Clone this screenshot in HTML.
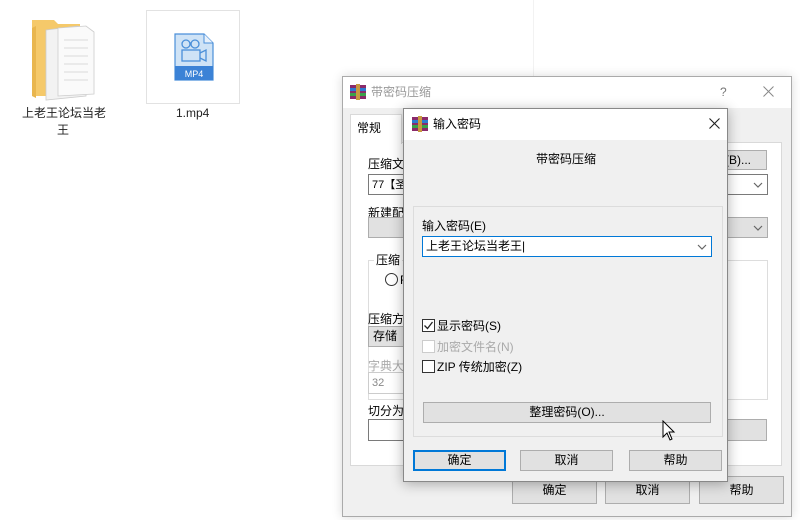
<!DOCTYPE html>
<html><head><meta charset="utf-8">
<style>
*{margin:0;padding:0;box-sizing:border-box}
body{width:800px;height:520px;background:#fff;position:relative;overflow:hidden;font-family:"Liberation Sans","Noto Sans CJK SC",sans-serif;font-size:12px;color:#000}
.a{position:absolute}
.t{position:absolute;white-space:nowrap;line-height:14px}
.btn{position:absolute;background:#e1e1e1;border:1px solid #adadad;text-align:center;line-height:18px}
.box{position:absolute;background:#fff;border:1px solid #7a7a7a}
.chev{position:absolute;width:10px;height:6px}
.cb{position:absolute;width:13px;height:13px;border:1px solid #333;background:#fff}
</style></head><body>

<div class="a" style="left:533px;top:0;width:1px;height:78px;background:#f2f2f2"></div>
<svg class="a" style="left:28px;top:16px" width="70" height="86" viewBox="0 0 70 86">
<path d="M4 4 L26 4 L30 8 L52 8 L52 80 L4 80 Z" fill="#f5c96a"/>
<path d="M4 12 L8 10 L8 82 L4 80Z" fill="#e9b64e"/>
<path d="M18 14 L50 10 L58 16 L58 80 L18 84 Z" fill="#f2f2f2" stroke="#ccc" stroke-width="0.8"/>
<path d="M30 12 L58 10 L66 16 L66 78 L30 80 Z" fill="#fafafa" stroke="#ccc" stroke-width="0.8"/>
<g stroke="#bbb" stroke-width="0.6"><line x1="36" y1="24" x2="60" y2="24"/><line x1="36" y1="32" x2="60" y2="32"/><line x1="36" y1="40" x2="60" y2="40"/><line x1="36" y1="48" x2="60" y2="48"/><line x1="36" y1="56" x2="60" y2="56"/><line x1="36" y1="64" x2="60" y2="64"/></g>
</svg>
<div class="t" style="left:22px;top:106px;font-size:12px;color:#222">上老王论坛当老</div>
<div class="t" style="left:57px;top:123px;font-size:12px;color:#222">王</div>

<div class="a" style="left:146px;top:10px;width:94px;height:94px;border:1px solid #e2e2e2"></div>
<svg class="a" style="left:174px;top:33px" width="40" height="48" viewBox="0 0 40 48">
<path d="M1 1 L30 1 L39 10 L39 47 L1 47 Z" fill="#cfe3f6" stroke="#4a8fd9" stroke-width="1.2"/>
<path d="M30 1 L30 10 L39 10" fill="#e8f1fb" stroke="#4a8fd9" stroke-width="1"/>
<rect x="1" y="33" width="38" height="14" fill="#3b82d6"/>
<text x="20" y="44" font-size="9" fill="#fff" text-anchor="middle" font-family="Liberation Sans">MP4</text>
<circle cx="12" cy="11" r="4" fill="none" stroke="#4a8fd9" stroke-width="1.3"/>
<circle cx="21" cy="11" r="4" fill="none" stroke="#4a8fd9" stroke-width="1.3"/>
<rect x="8" y="17" width="18" height="11" fill="none" stroke="#4a8fd9" stroke-width="1.3"/>
<path d="M26 20 L32 17 L32 28 L26 25" fill="none" stroke="#4a8fd9" stroke-width="1.3"/>
</svg>
<div class="t" style="left:176px;top:106px;color:#222">1.mp4</div>

<div class="a" style="left:342px;top:76px;width:450px;height:441px;border:1px solid #aaa;background:#f0f0f0;box-shadow:0 0 10px rgba(0,0,0,.15)">
  <div class="a" style="left:0;top:0;width:448px;height:31px;background:#fff"></div>
</div>
<svg class="a" style="left:350px;top:84px" width="16" height="16" viewBox="0 0 16 16"><rect x="0" y="1" width="16" height="14" fill="#8a2a6a"/><rect x="0" y="4" width="16" height="3" fill="#2c7bd0"/><rect x="0" y="9" width="16" height="3" fill="#3aa24a"/><rect x="6" y="0" width="4" height="16" fill="#c89a40"/></svg>
<div class="t" style="left:371px;top:85px;font-size:12px;color:#999">带密码压缩</div>
<div class="t" style="left:720px;top:85px;color:#777">?</div>
<svg class="a" style="left:763px;top:86px" width="11" height="11" viewBox="0 0 11 11"><path d="M0.5 0.5 L10.5 10.5 M10.5 0.5 L0.5 10.5" stroke="#888" stroke-width="1"/></svg>
<div class="a" style="left:350px;top:142px;width:432px;height:324px;background:#fff;border:1px solid #d9d9d9"></div>
<div class="a" style="left:350px;top:114px;width:52px;height:30px;background:#fff;border:1px solid #d9d9d9;border-bottom:none"></div>
<div class="t" style="left:357px;top:121px">常规</div>
<div class="t" style="left:368px;top:157px">压缩文</div>
<div class="box" style="left:368px;top:174px;width:400px;height:21px"></div>
<div class="t" style="left:372px;top:178px;font-size:11px">77【圣</div>
<svg class="chev" style="left:753px;top:182px" viewBox="0 0 10 6"><path d="M1 1 L5 5 L9 1" fill="none" stroke="#666" stroke-width="1.2"/></svg>
<div class="btn" style="left:720px;top:150px;width:47px;height:20px;text-align:left;padding-left:4px">(B)...</div>
<div class="t" style="left:368px;top:206px">新建配</div>
<div class="btn" style="left:368px;top:217px;width:400px;height:21px"></div>
<svg class="chev" style="left:753px;top:225px" viewBox="0 0 10 6"><path d="M1 1 L5 5 L9 1" fill="none" stroke="#666" stroke-width="1.2"/></svg>
<div class="a" style="left:368px;top:260px;width:400px;height:140px;border:1px solid #ddd"></div>
<div class="t" style="left:374px;top:253px;background:#fff;padding:0 2px">压缩</div>
<div class="a" style="left:385px;top:273px;width:13px;height:13px;border:1px solid #333;border-radius:50%"></div>
<div class="t" style="left:400px;top:273px">R</div>
<div class="t" style="left:368px;top:312px">压缩方</div>
<div class="btn" style="left:368px;top:326px;width:60px;height:21px;text-align:left;padding-left:4px">存储</div>
<div class="t" style="left:368px;top:359px;color:#aaa">字典大</div>
<div class="a" style="left:368px;top:372px;width:60px;height:22px;border:1px solid #ccc;background:#fff"></div>
<div class="t" style="left:372px;top:376px;color:#888;font-size:11px">32</div>
<div class="t" style="left:368px;top:404px">切分为</div>
<div class="box" style="left:368px;top:419px;width:60px;height:22px"></div>
<div class="btn" style="left:720px;top:419px;width:47px;height:22px"></div>
<div class="btn" style="left:512px;top:476px;width:85px;height:28px;line-height:26px">确定</div>
<div class="btn" style="left:605px;top:476px;width:85px;height:28px;line-height:26px">取消</div>
<div class="btn" style="left:699px;top:476px;width:85px;height:28px;line-height:26px">帮助</div>

<div class="a" style="left:403px;top:108px;width:325px;height:374px;border:1px solid #888;background:#f0f0f0;box-shadow:0 2px 12px rgba(0,0,0,.3)">
  <div class="a" style="left:0;top:0;width:323px;height:31px;background:#fff"></div>
</div>
<svg class="a" style="left:412px;top:116px" width="16" height="16" viewBox="0 0 16 16"><rect x="0" y="1" width="16" height="14" fill="#8a2a6a"/><rect x="0" y="4" width="16" height="3" fill="#2c7bd0"/><rect x="0" y="9" width="16" height="3" fill="#3aa24a"/><rect x="6" y="0" width="4" height="16" fill="#c89a40"/></svg>
<div class="t" style="left:433px;top:117px">输入密码</div>
<svg class="a" style="left:709px;top:118px" width="11" height="11" viewBox="0 0 11 11"><path d="M0.5 0.5 L10.5 10.5 M10.5 0.5 L0.5 10.5" stroke="#222" stroke-width="1.1"/></svg>
<div class="t" style="left:536px;top:152px">带密码压缩</div>
<div class="a" style="left:413px;top:206px;width:310px;height:231px;border:1px solid #dcdcdc;background:#f0f0f0"></div>
<div class="t" style="left:422px;top:219px">输入密码(E)</div>
<div class="a" style="left:422px;top:236px;width:290px;height:21px;background:#fff;border:1px solid #0078d7"></div>
<div class="t" style="left:426px;top:239px;font-size:12px">上老王论坛当老王|</div>
<svg class="chev" style="left:697px;top:244px" viewBox="0 0 10 6"><path d="M1 1 L5 5 L9 1" fill="none" stroke="#666" stroke-width="1.2"/></svg>
<div class="cb" style="left:422px;top:319px"></div>
<svg class="a" style="left:423px;top:320px" width="11" height="11" viewBox="0 0 11 11"><path d="M1.5 5.5 L4.5 8.5 L9.5 2" fill="none" stroke="#222" stroke-width="1.3"/></svg>
<div class="t" style="left:437px;top:319px">显示密码(S)</div>
<div class="cb" style="left:422px;top:340px;border-color:#ccc"></div>
<div class="t" style="left:437px;top:340px;color:#aaa">加密文件名(N)</div>
<div class="cb" style="left:422px;top:360px"></div>
<div class="t" style="left:437px;top:360px">ZIP 传统加密(Z)</div>
<div class="btn" style="left:423px;top:402px;width:288px;height:21px">整理密码(O)...</div>
<div class="btn" style="left:413px;top:450px;width:93px;height:21px;border:2px solid #0078d7;line-height:17px">确定</div>
<div class="btn" style="left:520px;top:450px;width:93px;height:21px">取消</div>
<div class="btn" style="left:629px;top:450px;width:93px;height:21px">帮助</div>

<svg class="a" style="left:662px;top:420px" width="14" height="22" viewBox="0 0 14 22"><path d="M1 1 L1 17 L5 13 L8 20 L10 19 L7 12 L12 12 Z" fill="#fff" stroke="#000" stroke-width="1"/></svg>
</body></html>
